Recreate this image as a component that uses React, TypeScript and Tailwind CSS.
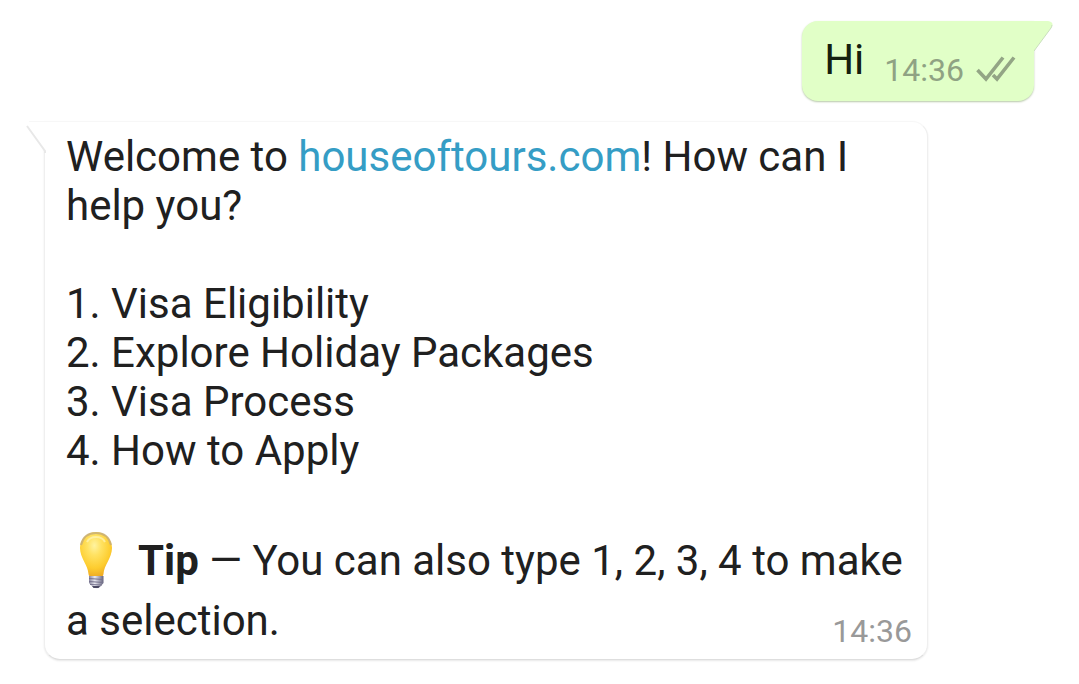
import React from "react";

const options = [
  "Visa Eligibility",
  "Explore Holiday Packages",
  "Visa Process",
  "How to Apply",
];

function Bulb() {
  return (
    <svg viewBox="0 0 34 58" role="img" aria-label="Light bulb" className="ml-[13px] mr-[25px] inline-block h-[58px] w-[34px] align-[-14px]">
      <defs>
        <radialGradient id="glass" cx="0.45" cy="0.3" r="0.72">
          <stop offset="0" stopColor="#fff3a0" />
          <stop offset="0.3" stopColor="#ffe262" />
          <stop offset="0.7" stopColor="#fdcd2f" />
          <stop offset="1" stopColor="#eda722" />
        </radialGradient>
        <linearGradient id="screw" x1="0" x2="1" y1="0" y2="0">
          <stop offset="0" stopColor="#85839b" />
          <stop offset="0.4" stopColor="#e8e8f0" />
          <stop offset="1" stopColor="#65637d" />
        </linearGradient>
      </defs>
      <path d="M17 1C8 1 1 8 1 17c0 10 8 17 8.500 26 .1 2 1.500 3 3.500 3h8c2 0 3.400-1 3.500-3C25 34 33 27 33 17 33 8 26 1 17 1Z" fill="url(#glass)" />
      <path d="M2 14C4 5 10 2 17 2s13 3 15 12" fill="none" stroke="#c4ab78" strokeWidth="2" opacity="0.8" />
      <path d="M8 11c2-4 5-5 9-5s7 1 9 5" fill="none" stroke="#fff8c5" strokeWidth="2" opacity="0.6" />
      <path d="M10 45h14.500v7L21 56c-2 1.600-5 1.600-7 0l-4-4Z" fill="url(#screw)" />
      <path d="M10 47.500l14 1M10 50.500l14 1M11 53.500l12 .5" stroke="#77738f" strokeWidth="1" />
      <path d="M13 55h8l-1.500 2h-5Z" fill="#4b4963" />
    </svg>
  );
}

function ReadTicks() {
  return (
    <svg viewBox="0 0 40 26" role="img" aria-label="Delivered" className="mb-1 h-[26px] w-10" fill="none" stroke="#93a585" strokeWidth="3.600">
      <path d="M1.500 14l8.500 9L27 1.500" />
      <path d="M17 19l4 4L38 1.500" />
    </svg>
  );
}

export default function App() {
  return (
    <main className="flex flex-col gap-5 pt-[21px] pb-6 pl-11 pr-[45px] font-[Roboto,sans-serif] text-[42px] leading-[49px] text-[#202020]">
      <article className="relative flex items-start self-end rounded-2xl rounded-tr-none bg-[#e1ffc7] pt-[14px] pr-[18px] pb-[6px] pl-[22px] shadow-[0_1px_2px_#b7c8a9]">
        <svg viewBox="0 0 20 32" aria-hidden="true" className="absolute top-0 left-full h-8 w-5">
          <path d="M0 0h14q7 1 3 7L0 30Z" fill="#e1ffc7" />
          <path d="M18 4q0 1-1 3L0 30" fill="none" stroke="#c9dfbd" strokeWidth="1" />
        </svg>
        <p className="text-[#14200f]">Hi</p>
        <footer className="ml-5 mt-[11px] flex items-center gap-3 text-[32px] leading-[49px] text-[#8fa283]">
          <time>14:36</time>
          <ReadTicks />
        </footer>
      </article>

      <article className="relative w-full max-w-[884px] rounded-2xl rounded-tl-none border border-t-[#f7f7f7] border-x-[#efefef] border-b-[#dedede] bg-white pt-[10px] pr-[15px] pb-2 pl-[21px] shadow-[0_1px_2px_#e8e8e8]">
        <svg viewBox="0 0 22 32" aria-hidden="true" className="absolute -top-px right-full -mr-0.5 h-8 w-[22px]">
          <path d="M22 0H5Q0 0 2 5l18 25h2Z" fill="#ffffff" />
          <path d="M22 .5H4" stroke="#f7f7f7" fill="none" />
          <path d="M2 5l18 25v2" stroke="#e8e8e8" strokeWidth="2" fill="none" />
        </svg>
        <p>
          Welcome to <a href="https://houseoftours.com" className="text-[#359dc5]">houseoftours.com</a>! How can I help you?
        </p>
        <ol className="mt-[49px]">
          {options.map((option, index) => (
            <li key={option}>{index + 1}. {option}</li>
          ))}
        </ol>
        <p className="mt-14 leading-[60px]">
          <Bulb />
          <strong className="font-bold">Tip</strong> — You can also type 1, 2, 3, 4 to make a selection.
        </p>
        <time className="absolute right-[15px] bottom-[9px] text-[32px] leading-[38px] text-[#999999]">14:36</time>
      </article>
    </main>
  );
}
